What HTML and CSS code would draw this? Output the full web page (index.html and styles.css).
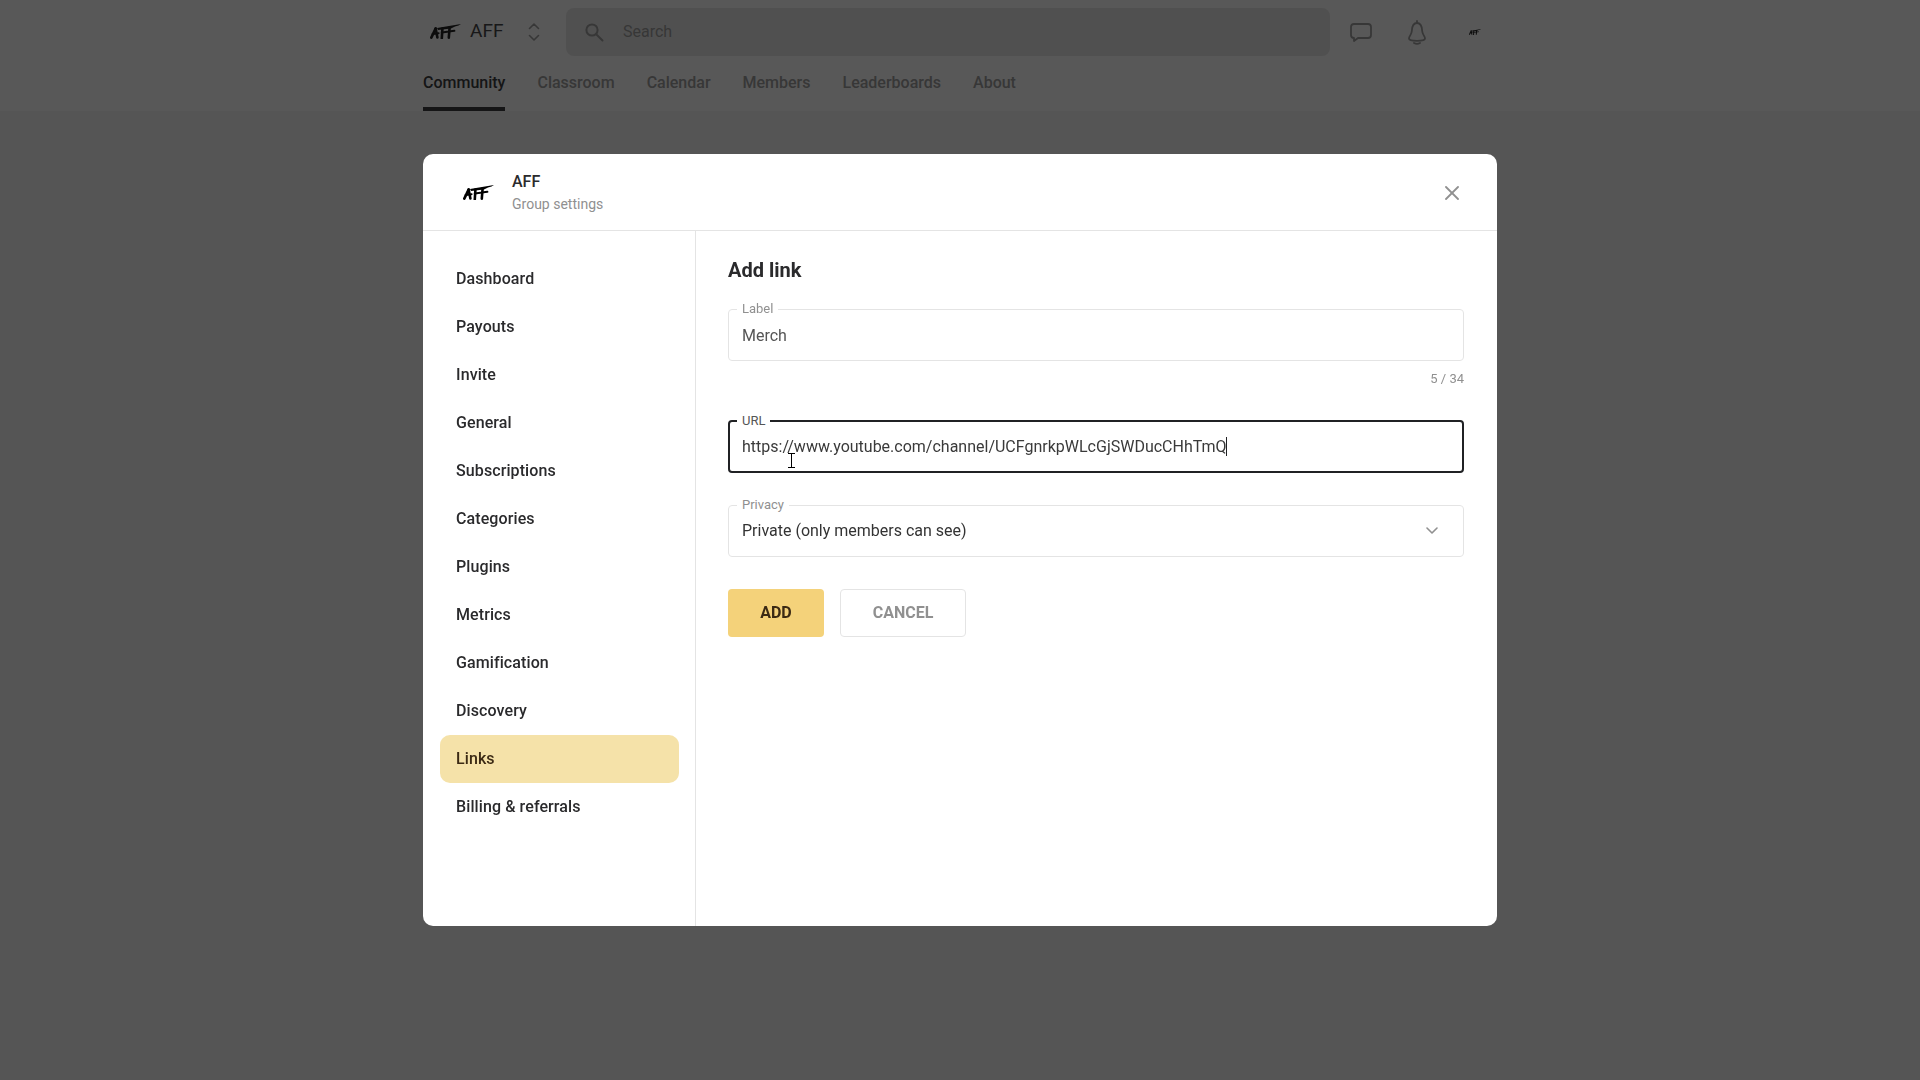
FILE: index.html
```html
<!DOCTYPE html>
<html lang="en">
<head>
<meta charset="utf-8">
<title>AFF - Group settings</title>
<link rel="stylesheet" href="styles.css">
</head>
<body>
<svg class="defs" width="0" height="0" aria-hidden="true">
  <symbol id="aff-logo" viewBox="0 0 31 15">
    <path d="M7 4 L31 0 L28.5 1.5 L25 2.6 L21 4.4 L8 6 Z" fill="#000"/>
    <g fill="none" stroke="#000" stroke-linecap="round">
      <path d="M1.3 13.6 L5.6 4.6" stroke-width="2.6"/>
      <path d="M5.6 4.4 L7.4 13.4" stroke-width="2.6"/>
      <path d="M2.6 10 L8.6 9.2" stroke-width="2"/>
      <path d="M12.4 4.6 L11.8 14.4" stroke-width="2.6"/>
      <path d="M11.8 8.6 L17.4 7.8" stroke-width="2"/>
      <path d="M19.6 3.6 L18.8 13.6" stroke-width="2.6"/>
      <path d="M18.8 7.6 L24.4 6.8" stroke-width="2"/>
    </g>
  </symbol>
</svg>

<header class="topbar">
  <div class="topbar-inner">
    <div class="top-row">
      <div class="group-switch">
        <svg class="logo" width="31" height="15"><use href="#aff-logo"/></svg>
        <span class="group-name">AFF</span>
        <svg class="unfold" width="12" height="18" viewBox="0 0 12 18" fill="none" stroke="#909090" stroke-width="1.6" stroke-linecap="round" stroke-linejoin="round"><path d="M1.5 5.5 L6 1 L10.5 5.5"/><path d="M1.5 12.5 L6 17 L10.5 12.5"/></svg>
      </div>
      <div class="search">
        <svg width="19" height="19" viewBox="0 0 19 19" fill="none" stroke="#909090" stroke-width="2" stroke-linecap="round"><circle cx="7" cy="7" r="5.6"/><path d="M11.2 11.2 L17.5 17.5"/></svg>
        <span class="search-text">Search</span>
      </div>
      <div class="top-icons">
        <svg class="chat" width="22" height="19" viewBox="0 0 22 19" fill="none" stroke="#909090" stroke-width="1.8" stroke-linejoin="round"><path d="M4 1 H18 Q21 1 21 4 V12 Q21 15 18 15 H8 L4 18 V15 Q1 15 1 12 V4 Q1 1 4 1 Z"/></svg>
        <svg class="bell" width="18" height="25" viewBox="0 0 18 25" fill="none" stroke="#909090" stroke-width="1.8" stroke-linecap="round" stroke-linejoin="round"><path d="M9 1 V3"/><path d="M9 3 C4.5 3 4 7 3.8 11 C3.6 15 1 16 1 18.5 C1 20 3 20.8 9 20.8 C15 20.8 17 20 17 18.5 C17 16 14.4 15 14.2 11 C14 7 13.5 3 9 3 Z"/><path d="M6 23 Q9 24.6 12 23"/></svg>
        <svg class="mini-logo" width="12" height="6"><use href="#aff-logo"/></svg>
      </div>
    </div>
    <nav class="tabs">
      <a class="tab tab-active">Community</a>
      <a class="tab">Classroom</a>
      <a class="tab">Calendar</a>
      <a class="tab">Members</a>
      <a class="tab">Leaderboards</a>
      <a class="tab">About</a>
    </nav>
  </div>
</header>

<div class="overlay">
  <section class="modal">
    <div class="modal-head">
      <svg class="modal-logo" width="31" height="15"><use href="#aff-logo"/></svg>
      <div class="modal-title">
        <div class="modal-name">AFF</div>
        <div class="modal-sub">Group settings</div>
      </div>
      <svg class="close" width="14" height="14" viewBox="0 0 14 14" fill="none" stroke="#909090" stroke-width="1.8" stroke-linecap="round"><path d="M1 1 L13 13"/><path d="M13 1 L1 13"/></svg>
    </div>
    <div class="modal-body">
      <aside class="side">
        <a class="side-item">Dashboard</a>
        <a class="side-item">Payouts</a>
        <a class="side-item">Invite</a>
        <a class="side-item">General</a>
        <a class="side-item">Subscriptions</a>
        <a class="side-item">Categories</a>
        <a class="side-item">Plugins</a>
        <a class="side-item">Metrics</a>
        <a class="side-item">Gamification</a>
        <a class="side-item">Discovery</a>
        <a class="side-item side-active">Links</a>
        <a class="side-item">Billing &amp; referrals</a>
      </aside>
      <main class="main">
        <h2 class="main-title">Add link</h2>
        <div class="field field-label">
          <span class="field-tag">Label</span>
          <span class="value value-muted">Merch</span>
        </div>
        <div class="counter">5 / 34</div>
        <div class="field field-focus">
          <span class="field-tag">URL</span>
          <span class="value value-url">https://www.youtube.com/channel/UCFgnrkpWLcGjSWDucCHhTmQ</span><span class="caret"></span>
          <svg class="ibeam" width="9" height="15" viewBox="0 0 9 15" fill="none" stroke="#000" stroke-width="1"><path d="M1 .5 H8 M4.5 .5 V14.5 M1 14.5 H8"/></svg>
        </div>
        <div class="field field-select">
          <span class="field-tag">Privacy</span>
          <span class="value value-select">Private (only members can see)</span>
          <svg class="select-arrow" width="12" height="7" viewBox="0 0 12 7" fill="none" stroke="#909090" stroke-width="1.6" stroke-linecap="round" stroke-linejoin="round"><path d="M1 1 L6 6 L11 1"/></svg>
        </div>
        <div class="actions">
          <button class="btn btn-add">ADD</button>
          <button class="btn btn-cancel">CANCEL</button>
        </div>
      </main>
    </div>
  </section>
</div>
</body>
</html>
```

FILE: styles.css
```css
* { box-sizing: border-box; }

html, body {
  margin: 0;
  height: 1080px;
  overflow: hidden;
}

body {
  background: #f4f4f4;
  color: #2a2a2c;
  font-family: Roboto, "Liberation Sans", sans-serif;
  font-size: 16px;
}

.defs { position: absolute; }

.topbar {
  background: #fff;
  height: 111px;
}

.topbar-inner {
  width: 1074px;
  margin: 0 auto;
}

.top-row {
  display: flex;
  align-items: center;
  height: 64px;
}

.group-switch {
  display: flex;
  align-items: center;
  width: 143px;
  padding-left: 7px;
}

.logo { margin-bottom: 2px; }

.group-name {
  margin-left: 9px;
  padding-bottom: 2px;
  font-size: 19px;
  line-height: 24px;
}

.unfold { margin-left: 25px; }

.search {
  display: flex;
  align-items: center;
  width: 764px;
  height: 48px;
  padding-left: 19px;
  background: #e4e4e4;
  border-radius: 8px;
}

.search-text {
  margin-left: 19px;
  padding-bottom: 2px;
  color: #909090;
}

.top-icons {
  display: flex;
  align-items: center;
}

.chat { margin-left: 20px; }
.bell { margin-left: 36px; }
.mini-logo { margin-left: 43px; }

.tabs {
  display: flex;
  gap: 32px;
}

.tab {
  height: 47px;
  padding-top: 9px;
  color: #909090;
  font-weight: 500;
  line-height: 20px;
}

.tab-active {
  color: #202124;
  border-bottom: 4px solid #202124;
}

.overlay {
  position: fixed;
  inset: 0;
  display: flex;
  justify-content: center;
  align-items: flex-start;
  padding-top: 154px;
  background: rgba(17, 17, 17, .7);
}

.modal {
  width: 1074px;
  height: 772px;
  background: #fff;
  border-radius: 10px;
  overflow: hidden;
  display: flex;
  flex-direction: column;
}

.modal-head {
  display: flex;
  align-items: center;
  height: 77px;
  flex: none;
  padding: 0 38px 0 40px;
  border-bottom: 1px solid #e4e4e4;
}

.modal-title {
  margin-left: 18px;
  padding-top: 1px;
}

.modal-name {
  font-weight: 500;
  line-height: 22px;
}

.modal-sub {
  margin-top: 1px;
  color: #909090;
  font-size: 14px;
  line-height: 20px;
}

.close {
  margin-left: auto;
  margin-top: 1px;
}

.modal-body {
  flex: 1;
  display: flex;
  min-height: 0;
}

.side {
  width: 273px;
  flex: none;
  padding: 24px 16px 0 17px;
  border-right: 1px solid #e4e4e4;
}

.side-item {
  display: flex;
  align-items: center;
  height: 48px;
  padding: 0 0 2px 16px;
  border-radius: 10px;
  font-weight: 500;
  letter-spacing: .1px;
}

.side-active {
  background: #f5e2a9;
  color: #3b2a14;
}

.main {
  flex: 1;
  padding: 27px 33px 0 32px;
}

.main-title {
  margin: 0 0 27px;
  font-size: 20px;
  font-weight: 700;
  line-height: 24px;
}

.field {
  position: relative;
  display: flex;
  align-items: center;
  height: 52px;
  padding: 0 13px;
  border: 1px solid #e4e4e4;
  border-radius: 4px;
}

.field-tag {
  position: absolute;
  left: 8px;
  top: -9px;
  padding: 0 5px;
  background: #fff;
  color: #909090;
  font-size: 13px;
  line-height: 16px;
}

.value-muted { color: #555; }
.value-url { color: #3a3a3a; }
.value-select { color: #333; padding-bottom: 2px; }

.counter {
  margin-top: 10px;
  color: #909090;
  font-size: 13px;
  line-height: 16px;
  text-align: right;
}

.field-focus {
  height: 53px;
  margin-top: 33px;
  padding: 0 12px;
  border: 2px solid #202124;
}

.field-focus .field-tag {
  left: 7px;
  top: -9px;
  color: #555;
}

.caret {
  width: 1px;
  height: 19px;
  background: #202124;
}

.ibeam {
  position: absolute;
  left: 57px;
  top: 31px;
}

.field-select {
  margin-top: 32px;
  justify-content: space-between;
}

.select-arrow {
  margin-right: 12px;
  margin-bottom: 2px;
}

.actions {
  display: flex;
  gap: 16px;
  margin-top: 32px;
}

.btn {
  height: 48px;
  padding: 0 0 2px;
  border-radius: 4px;
  font-family: inherit;
  font-size: 16px;
  font-weight: 700;
}

.btn-add {
  width: 96px;
  border: 0;
  background: #f4d27a;
  color: #3b2a14;
}

.btn-cancel {
  width: 126px;
  border: 1px solid #e4e4e4;
  background: #fff;
  color: #909090;
}
```
